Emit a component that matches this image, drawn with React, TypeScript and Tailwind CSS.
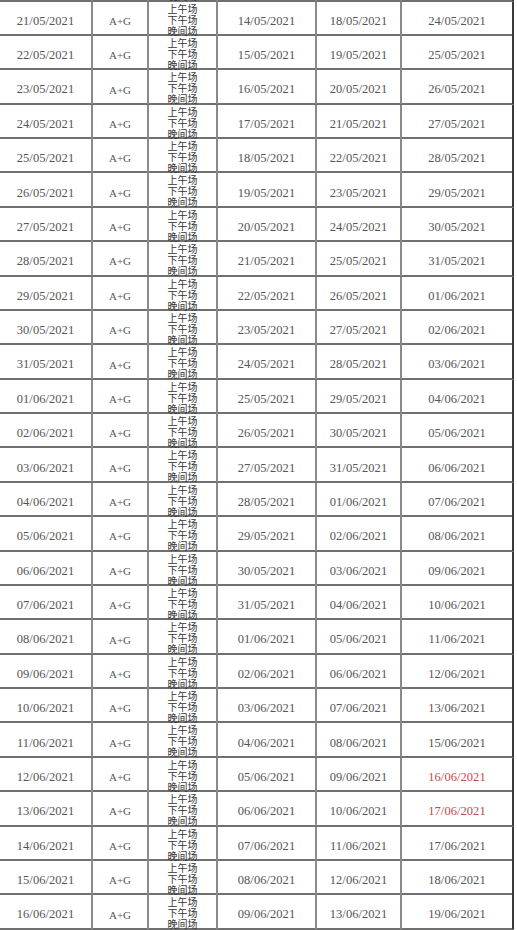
import React from "react";

const pad = (n: number) => (n < 10 ? "0" + n : "" + n);
const fmt = (d: Date) => `${pad(d.getDate())}/${pad(d.getMonth() + 1)}/${d.getFullYear()}`;
const shift = (d: Date, days: number) => new Date(d.getFullYear(), d.getMonth(), d.getDate() + days);

const PLUS4 = new Set(["11/06/2021", "12/06/2021", "13/06/2021"]);
const RED_ROWS = new Set(["12/06/2021", "13/06/2021"]);

function Row({ base, first }: { base: Date; first?: boolean }) {
  const c1 = fmt(base);
  const c4 = fmt(shift(base, -7));
  const c5 = fmt(shift(base, -3));
  const c6 = fmt(shift(base, PLUS4.has(c1) ? 4 : 3));
  const dateCls =
    "flex items-center justify-center pt-[5px] text-[12.5px] tracking-[0.05px] text-[#555] border-r-2 border-[#8a8a8a]";
  return (
    <div
      className={
        "grid grid-cols-[93px_56px_69px_99px_85px_112px] h-[34.375px] border-b-2 border-[#707070] " +
        (first ? "mt-[-32.775px]" : "")
      }
      style={{ fontFamily: '"Liberation Serif", "Noto Sans CJK SC", serif' }}
    >
      <div className={dateCls}>{c1}</div>
      <div className="flex items-center justify-center pt-[5px] text-[11px] text-[#555] border-r-2 border-[#8a8a8a]">
        A+G
      </div>
      <div
        className="flex flex-col items-center pt-[1px] text-[10px] leading-[11px] text-[#333] border-r-2 border-[#8a8a8a]"
        style={{ fontFamily: '"Noto Sans CJK SC", sans-serif' }}
      >
        <span>上午场</span>
        <span>下午场</span>
        <span>晚间场</span>
      </div>
      <div className={dateCls}>{c4}</div>
      <div className={dateCls}>{c5}</div>
      <div
        className={
          "flex items-center justify-center pt-[5px] text-[12.5px] tracking-[0.05px] border-r-2 border-[#3a3a3a] " +
          (RED_ROWS.has(c1) ? "text-[#c24a4a]" : "text-[#555]")
        }
      >
        {c6}
      </div>
    </div>
  );
}

export default function App() {
  const rows: Date[] = [];
  for (let i = 0; i < 28; i++) rows.push(new Date(2021, 4, 20 + i));
  return (
    <div className="w-[517px] h-[930px] overflow-hidden bg-white">
      <div className="w-[514px]">
        {rows.map((d, i) => (
          <Row key={i} base={d} first={i === 0} />
        ))}
      </div>
    </div>
  );
}
